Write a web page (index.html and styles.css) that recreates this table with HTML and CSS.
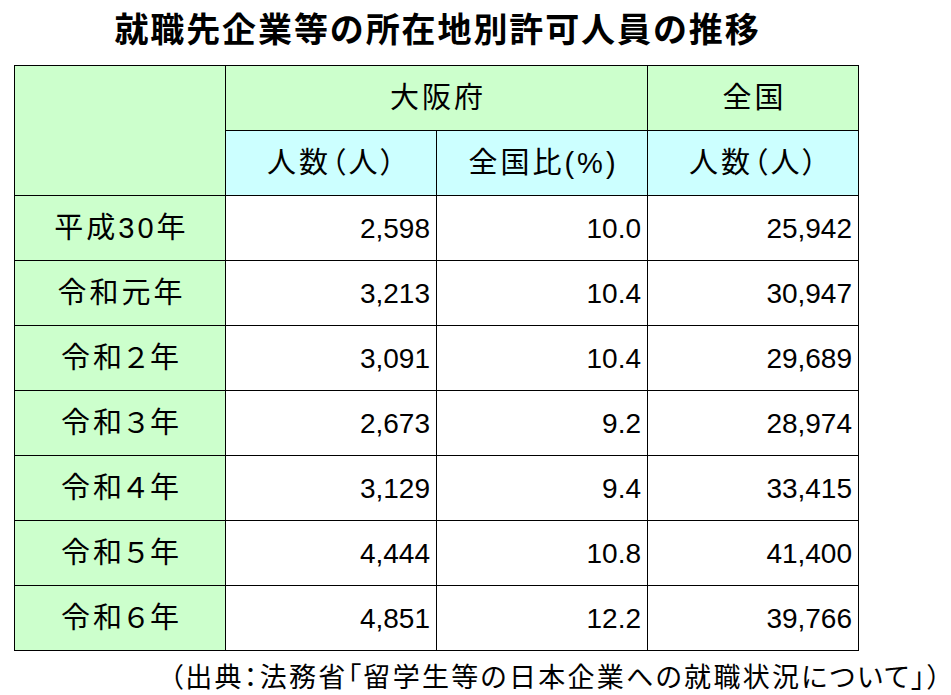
FILE: index.html
```html
<!DOCTYPE html>
<html lang="ja">
<head>
<meta charset="utf-8">
<link rel="stylesheet" href="styles.css">
</head>
<body>
<div class="page">
  <h1 class="title">就職先企業等の所在地別許可人員の推移</h1>
  <table class="data">
    <colgroup><col class="c"><col class="c"><col class="c"><col class="c"></colgroup>
    <thead>
      <tr>
        <th class="green corner" rowspan="2"></th>
        <th class="green lbl" colspan="2">大阪府</th>
        <th class="green lbl">全国</th>
      </tr>
      <tr>
        <th class="cyan lbl">人数（人）</th>
        <th class="cyan lbl">全国比(%)</th>
        <th class="cyan lbl">人数（人）</th>
      </tr>
    </thead>
    <tbody>
      <tr><th class="green lbl">平成30年</th><td>2,598</td><td>10.0</td><td>25,942</td></tr>
      <tr><th class="green lbl">令和元年</th><td>3,213</td><td>10.4</td><td>30,947</td></tr>
      <tr><th class="green lbl">令和２年</th><td>3,091</td><td>10.4</td><td>29,689</td></tr>
      <tr><th class="green lbl">令和３年</th><td>2,673</td><td>9.2</td><td>28,974</td></tr>
      <tr><th class="green lbl">令和４年</th><td>3,129</td><td>9.4</td><td>33,415</td></tr>
      <tr><th class="green lbl">令和５年</th><td>4,444</td><td>10.8</td><td>41,400</td></tr>
      <tr><th class="green lbl">令和６年</th><td>4,851</td><td>12.2</td><td>39,766</td></tr>
    </tbody>
  </table>
  <p class="source">（出典：法務省「留学生等の日本企業への就職状況について」）</p>
</div>
</body>
</html>
```

FILE: styles.css
```css
html, body {
  margin: 0;
  padding: 0;
  background: #ffffff;
}

.page {
  width: 951px;
  height: 695px;
  overflow: hidden;
  font-family: "Liberation Sans", "Noto Sans CJK JP", sans-serif;
  color: #000;
}

.title {
  margin: 0;
  width: 845px;
  margin-left: 14px;
  height: 65px;
  line-height: 56px;
  text-align: center;
  font-family: "Noto Sans CJK JP", sans-serif;
  font-weight: 700;
  font-size: 34px;
  letter-spacing: 1.9px;
  text-indent: 2px;
  white-space: nowrap;
}

.data {
  margin-left: 14px;
  border-collapse: collapse;
  table-layout: fixed;
  width: 845px;
}

.data .c {
  width: 211px;
}

.data tr {
  height: 65px;
}

.data th,
.data td {
  border: 1px solid #000;
  padding: 0;
  vertical-align: middle;
  font-size: 28px;
  font-weight: 400;
  line-height: 1;
}

.data td {
  text-align: right;
  padding-right: 6px;
  padding-top: 2px;
  background: #fff;
}

.data .lbl {
  text-align: center;
  font-size: 29px;
  letter-spacing: 3px;
  padding-left: 3px;
  font-feature-settings: "palt" 1;
}

.green {
  background: #ccffcc;
}

.cyan {
  background: #ccffff;
}

.source {
  margin: 0;
  height: 44px;
  line-height: 50px;
  text-align: right;
  padding-right: 8px;
  font-family: "Noto Sans CJK JP", sans-serif;
  font-size: 27px;
  letter-spacing: 2.3px;
  white-space: nowrap;
  font-feature-settings: "palt" 1;
}
```
